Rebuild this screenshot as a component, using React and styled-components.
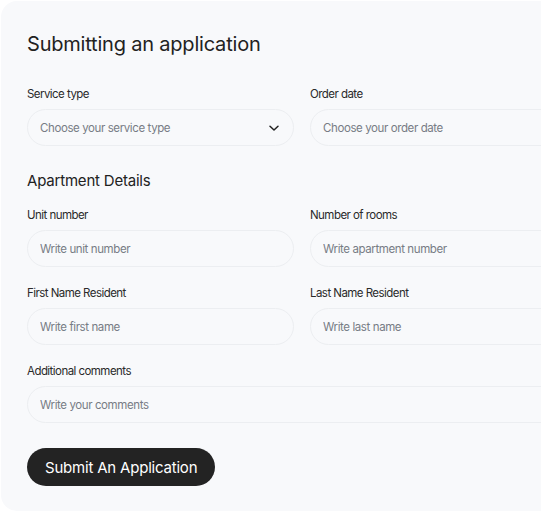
import styled, { createGlobalStyle } from 'styled-components';

const GlobalStyle = createGlobalStyle`
  body {
    margin: 0;
    background: #ffffff;
    font-family: Inter, "Liberation Sans", sans-serif;
    overflow: hidden;
  }
`;

const Card = styled.form`
  margin: 1px 0 0 1px;
  width: 604px;
  box-sizing: border-box;
  padding: 31px 26px 25px;
  background: #f8f9fb;
  border-radius: 16px;
  display: flex;
  flex-direction: column;
`;

const Title = styled.h1`
  margin: 0;
  font-size: 20px;
  line-height: 24px;
  font-weight: 400;
  color: #222222;
  letter-spacing: -0.2px;
`;

const SectionTitle = styled.h2`
  margin: ${(p) => p.$top}px 0 0;
  font-size: 15px;
  line-height: 20px;
  font-weight: 400;
  color: #222222;
  letter-spacing: -0.2px;
`;

const Grid = styled.div`
  margin-top: ${(p) => p.$top}px;
  display: grid;
  grid-template-columns: 267px 267px;
  column-gap: 16px;
  row-gap: 18px;
`;

const Field = styled.label`
  display: flex;
  flex-direction: column;
  gap: 6px;
  grid-column: ${(p) => (p.$wide ? '1 / -1' : 'auto')};
`;

const Label = styled.span`
  font-size: 11.5px;
  line-height: 17px;
  color: #2a2a2a;
  letter-spacing: -0.55px;
`;

const InputBox = styled.div`
  height: 37px;
  box-sizing: border-box;
  border: 1px solid #eceef1;
  border-radius: 999px;
  background: #f8f9fb;
  display: flex;
  align-items: center;
  padding: 0 13px 0 12px;
`;

const Input = styled.input`
  flex: 1;
  min-width: 0;
  border: none;
  outline: none;
  background: transparent;
  font-family: inherit;
  font-size: 11.5px;
  color: #222;
  padding: 0;
  letter-spacing: -0.4px;
  &::placeholder {
    color: #777c85;
  }
`;

const Chevron = styled.svg`
  width: 12px;
  height: 12px;
  flex-shrink: 0;
`;

const SubmitButton = styled.button`
  margin-top: 25px;
  align-self: flex-start;
  height: 38px;
  padding: 0 18px;
  border: none;
  border-radius: 999px;
  background: #232323;
  color: #ffffff;
  font-family: inherit;
  font-size: 15px;
  letter-spacing: -0.2px;
  cursor: pointer;
`;

function TextField({ label, placeholder, wide, select }) {
  return (
    <Field $wide={wide}>
      <Label>{label}</Label>
      <InputBox>
        <Input placeholder={placeholder} readOnly={select} />
        {select && (
          <Chevron viewBox="0 0 12 12" fill="none">
            <path d="M2 4.2 6 8 10 4.2" stroke="#222" strokeWidth="1.5" strokeLinecap="round" strokeLinejoin="round" />
          </Chevron>
        )}
      </InputBox>
    </Field>
  );
}

export default function App() {
  return (
    <>
      <GlobalStyle />
      <Card onSubmit={(e) => e.preventDefault()}>
        <Title>Submitting an application</Title>
        <Grid $top={30}>
          <TextField label="Service type" placeholder="Choose your service type" select />
          <TextField label="Order date" placeholder="Choose your order date" />
        </Grid>
        <SectionTitle $top={25}>Apartment Details</SectionTitle>
        <Grid $top={16}>
          <TextField label="Unit number" placeholder="Write unit number" />
          <TextField label="Number of rooms" placeholder="Write apartment number" />
          <TextField label="First Name Resident" placeholder="Write first name" />
          <TextField label="Last Name Resident" placeholder="Write last name" />
          <TextField label="Additional comments" placeholder="Write your comments" wide />
        </Grid>
        <SubmitButton type="submit">Submit An Application</SubmitButton>
      </Card>
    </>
  );
}
